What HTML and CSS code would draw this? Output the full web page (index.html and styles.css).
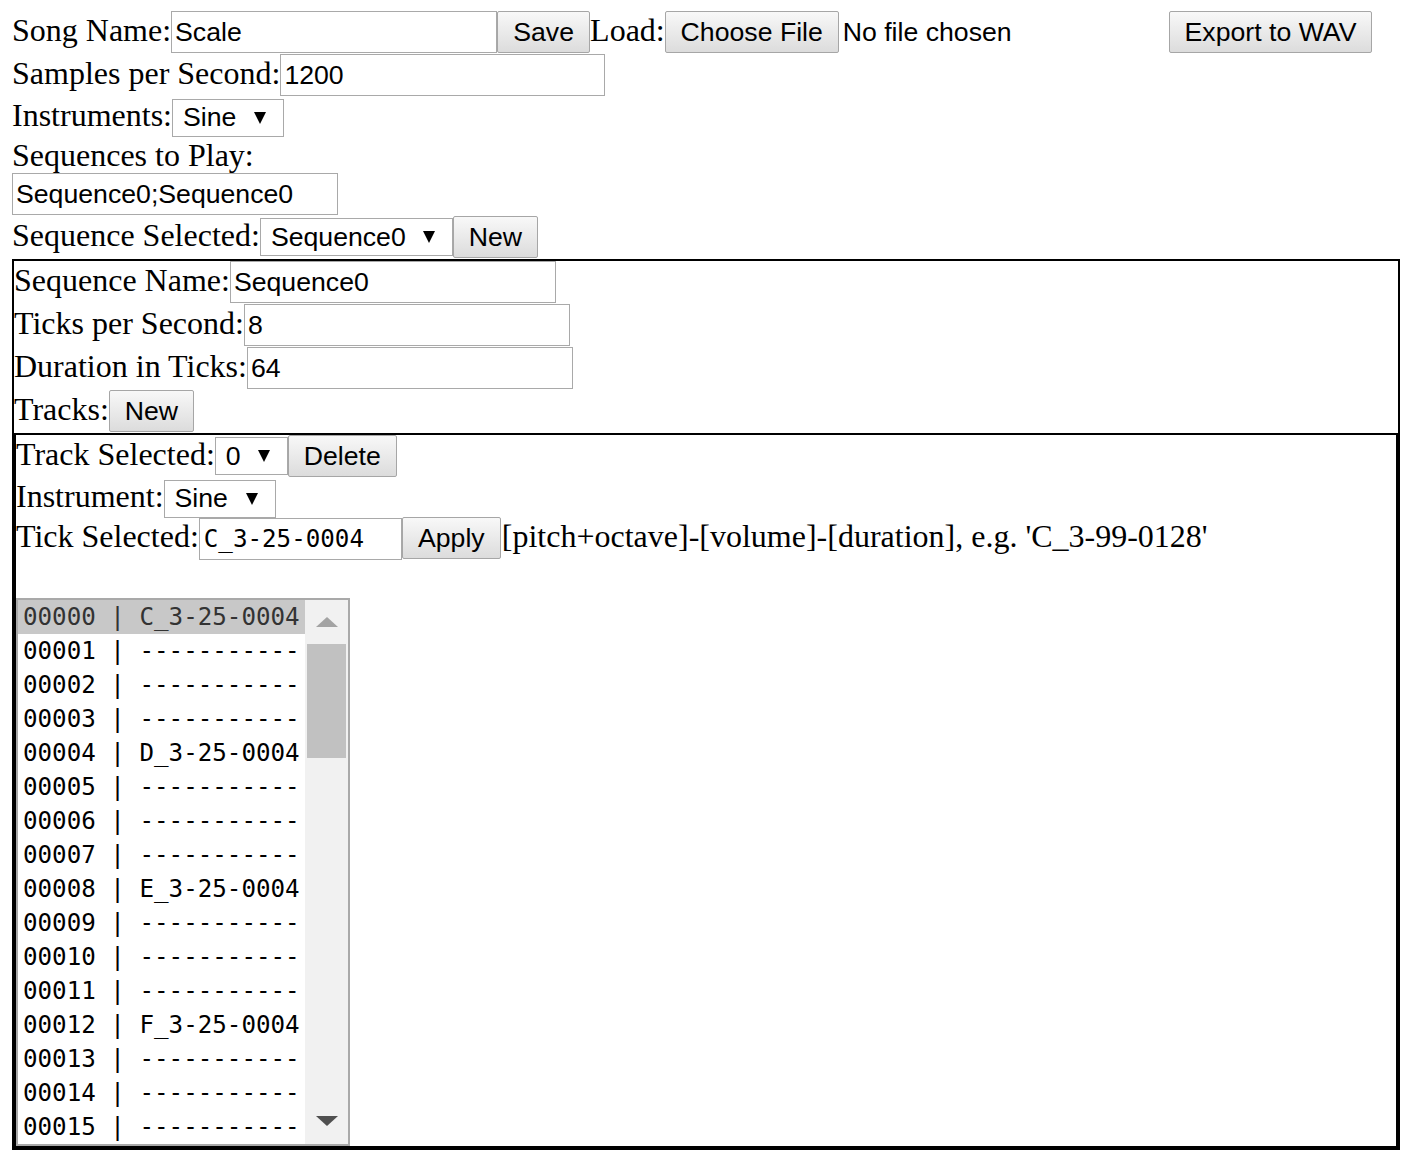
FILE: index.html
```html
<!DOCTYPE html>
<html>
<head>
<meta charset="utf-8">
<link rel="stylesheet" href="styles.css">
</head>
<body>
<div class="row h43">
  <span class="lbl">Song Name:</span><input class="field w326" value="Scale"><button class="btn w93">Save</button><span class="lbl">Load:</span><button class="btn w174">Choose File</button><span class="nofile">No file chosen</span><button class="btn w203 export">Export to WAV</button>
</div>
<div class="row h43">
  <span class="lbl">Samples per Second:</span><input class="field w325" value="1200">
</div>
<div class="row h40">
  <span class="lbl">Instruments:</span><div class="sel w112"><span>Sine</span><i class="arrow"></i></div>
</div>
<div class="row h36">
  <span class="lbl">Sequences to Play:</span>
</div>
<div class="row h43">
  <input class="field w326" value="Sequence0;Sequence0">
</div>
<div class="row h43">
  <span class="lbl">Sequence Selected:</span><div class="sel w193"><span>Sequence0</span><i class="arrow"></i></div><button class="btn w85">New</button>
</div>
<div class="seqbox">
  <div class="row h43">
    <span class="lbl">Sequence Name:</span><input class="field w326" value="Sequence0">
  </div>
  <div class="row h43">
    <span class="lbl">Ticks per Second:</span><input class="field w326" value="8">
  </div>
  <div class="row h43">
    <span class="lbl">Duration in Ticks:</span><input class="field w326" value="64">
  </div>
  <div class="row h43">
    <span class="lbl">Tracks:</span><button class="btn w85">New</button>
  </div>
  <div class="trackbox">
    <div class="row h43">
      <span class="lbl">Track Selected:</span><div class="sel w73"><span>0</span><i class="arrow"></i></div><button class="btn w109">Delete</button>
    </div>
    <div class="row h39">
      <span class="lbl">Instrument:</span><div class="sel w112"><span>Sine</span><i class="arrow"></i></div>
    </div>
    <div class="row h44">
      <span class="lbl">Tick Selected:</span><input class="field mono w203" value="C_3-25-0004"><button class="btn w99">Apply</button><span class="lbl hint">[pitch+octave]-[volume]-[duration], e.g. 'C_3-99-0128'</span>
    </div>
    <div class="listbox">
      <div class="opts">
        <div class="opt hl">00000 | C_3-25-0004</div>
        <div class="opt">00001 | -----------</div>
        <div class="opt">00002 | -----------</div>
        <div class="opt">00003 | -----------</div>
        <div class="opt">00004 | D_3-25-0004</div>
        <div class="opt">00005 | -----------</div>
        <div class="opt">00006 | -----------</div>
        <div class="opt">00007 | -----------</div>
        <div class="opt">00008 | E_3-25-0004</div>
        <div class="opt">00009 | -----------</div>
        <div class="opt">00010 | -----------</div>
        <div class="opt">00011 | -----------</div>
        <div class="opt">00012 | F_3-25-0004</div>
        <div class="opt">00013 | -----------</div>
        <div class="opt">00014 | -----------</div>
        <div class="opt">00015 | -----------</div>
      </div>
      <div class="sb">
        <i class="sb-up"></i>
        <div class="sb-thumb"></div>
        <i class="sb-down"></i>
      </div>
    </div>
  </div>
</div>
</body>
</html>
```
FILE: styles.css
```css
html, body {
  background: #fff;
}
body {
  margin: 11px 12px 0;
  font-family: "Liberation Serif", "Times New Roman", serif;
  font-size: 32px;
  color: #000;
}
.row {
  display: flex;
  align-items: baseline;
  white-space: nowrap;
}
.h36 { height: 36px; }
.h39 { height: 39px; }
.h40 { height: 40px; }
.h43 { height: 43px; }
.h44 { height: 44px; }
.lbl {
  line-height: 36px;
}
.field {
  box-sizing: border-box;
  height: 42px;
  margin: 0;
  padding: 0 3px;
  border: 1px solid #a9a9a9;
  background: #fff;
  color: #000;
  font-family: "Liberation Sans", Arial, sans-serif;
  font-size: 26.67px;
  outline: none;
}
.field.mono {
  font-family: "DejaVu Sans Mono", monospace;
  font-size: 24.2px;
  padding-left: 4px;
}
.btn {
  box-sizing: border-box;
  height: 42px;
  margin: 0;
  padding: 0;
  border: 1px solid #a6a6a6;
  border-radius: 2px;
  background: linear-gradient(#f8f8f8, #dcdcdc);
  color: #000;
  font-family: "Liberation Sans", Arial, sans-serif;
  font-size: 26.67px;
  text-align: center;
}
.nofile {
  margin-left: 4px;
  font-family: "Liberation Sans", Arial, sans-serif;
  font-size: 26.67px;
}
.export {
  margin-left: auto;
  margin-right: 28px;
}
.sel {
  box-sizing: border-box;
  height: 38px;
  display: flex;
  align-items: center;
  justify-content: space-between;
  padding: 0 17px 0 10px;
  border: 1px solid #a9a9a9;
  background: #fff;
  font-family: "Liberation Sans", Arial, sans-serif;
  font-size: 26.67px;
}
.arrow {
  display: block;
  width: 0;
  height: 0;
  border-left: 6px solid transparent;
  border-right: 6px solid transparent;
  border-top: 12px solid #000;
}
.w73 { width: 73px; }
.w85 { width: 85px; }
.w93 { width: 93px; }
.w99 { width: 99px; }
.w109 { width: 109px; }
.w112 { width: 112px; }
.w174 { width: 174px; }
.w193 { width: 193px; }
.w203 { width: 203px; }
.w325 { width: 325px; }
.w326 { width: 326px; }
.hint {
  margin-left: 1px;
}
.seqbox {
  border: 2px solid #000;
}
.trackbox {
  border: 2px solid #000;
  display: flex;
  flex-direction: column;
}
.listbox {
  margin-top: 37px;
  width: 334px;
  box-sizing: border-box;
  border: 2px solid #a9a9a9;
  display: flex;
}
.opts {
  width: 287px;
}
.opt {
  height: 34px;
  line-height: 34px;
  padding-left: 5px;
  white-space: pre;
  font-family: "DejaVu Sans Mono", monospace;
  font-size: 24.2px;
  color: #000;
}
.opt.hl {
  background: #c8c8c8;
  color: #333;
}
.sb {
  width: 43px;
  background: #f1f1f1;
  position: relative;
}
.sb-up, .sb-down {
  position: absolute;
  left: 11px;
  width: 0;
  height: 0;
  border-left: 11px solid transparent;
  border-right: 11px solid transparent;
}
.sb-up {
  top: 17px;
  border-bottom: 10px solid #a3a3a3;
}
.sb-down {
  bottom: 18px;
  border-top: 10px solid #505050;
}
.sb-thumb {
  margin: 44px 2px 0 2px;
  height: 114px;
  background: #c1c1c1;
}
```
